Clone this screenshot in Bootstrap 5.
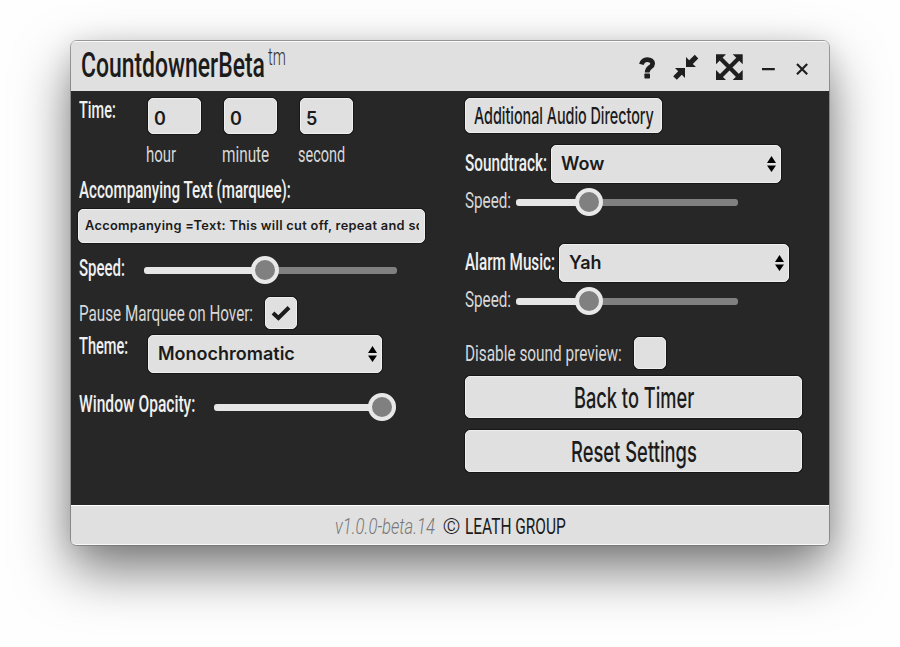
<!DOCTYPE html>
<html lang="en">
<head>
<meta charset="utf-8">
<meta name="viewport" content="width=device-width, initial-scale=1">
<title>CountdownerBeta</title>
<link rel="stylesheet" href="https://cdn.jsdelivr.net/npm/bootstrap@5.3.0/dist/css/bootstrap.min.css">
<style>
  :root { --ink: #272727; --paper: #e0e0e0; --mid: #808080; }
  body { background: #fefefe; padding: 41px 71px; height: 647px; overflow: hidden; font-family: Roboto, "Liberation Sans", sans-serif; }
  .app-window { width: 758px; height: 504px; border-radius: 6px; background: var(--ink);
    box-shadow: 0 0 0 1px rgba(110,110,110,.65), 0 25px 54px rgba(0,0,0,.52), 0 2px 26px rgba(0,0,0,.1); }
  .title-bar { height: 50px; background: var(--paper); color: #1f1f1f; border-radius: 5px 5px 0 0; border-top: 1px solid #fafafa; padding: 0 20px 0 10px; }
  .status-bar { height: 40px; background: var(--paper); border-radius: 0 0 5px 5px; border-top: 1px solid #fff; border-bottom: 1px solid #f8f8f8; padding-top: 8px; }
  .panel { height: 414px; padding: 6px 8px 0; }
  .col-l { width: 386px; }
  .col-r { width: 337px; }

  /* condensed display lettering: the text is squeezed to its data-w width */
  .fit { display: inline-block; flex: none; height: 24px; line-height: 26px; font-size: 23.5px; font-weight: 500; white-space: nowrap; color: #f0f0f0; text-align: left; }
  .fit > span { display: inline-block; transform-origin: 0 50%; }
  .fit.up { line-height: 23px; }
  .fit.thin { font-weight: 400; color: #d8d8d8; font-size: 22.5px; line-height: 24px; }
  .fit.thin.up { line-height: 22px; }
  .fit.dark { color: #1b1b1b; }
  .fit.brand { font-size: 35px; height: 48px; line-height: 48px; }
  .fit.tm { font-size: 23px; margin: 4px 0 0 3px; color: #333; font-weight: 300; }
  .fit.action { font-size: 29px; height: 40px; line-height: 42px; }
  .fit.light { font-weight: 300; }
  .fit.ver { color: #777; font-style: italic; font-weight: 300; }

  .tile { background: var(--paper); color: #1b1b1b; border: 1px solid #efefef; border-radius: 5px; box-shadow: 0 0 0 1px #171717; font-family: Inter, sans-serif; font-weight: 600; font-size: 18px; line-height: 1; flex: none; }
  .clock { width: 228px; margin: 1px 0 0 32px; }
  .num { width: 53px; height: 36px; padding: 6px 0 0 5px; }
  .num-cell { width: 76px; }
  .num-cell .fit { margin: 8px 0 0 -2px; }
  .marquee-field { width: 347px; height: 34px; padding: 0 5px 0 6px; font-size: 12.8px; letter-spacing: .3px; margin-left: -1px; }
  .marquee-field > div { line-height: 32px; }
  .pick { height: 38px; padding: 0 4px 0 9px; }
  .box { width: 32px; height: 32px; }
  .box-pause { margin-left: 12px; }
  .box-preview { margin-left: 12px; }
  .theme-pick { width: 234px; margin-left: 20px; }
  .audio-pick { width: 230px; margin: -1px 0 0 4px; }
  .dir { width: 197px; height: 35px; margin-top: 1px; padding-top: 4px; }
  .wide { width: 337px; height: 42px; margin-bottom: 12px; }

  .slide { -webkit-appearance: none; appearance: none; height: 28px; background: none; display: block; flex: none; margin: 0; }
  .slide::-webkit-slider-runnable-track { height: 7px; border-radius: 3px; background: linear-gradient(90deg, #e6e6e6 var(--at), var(--mid) var(--at)); }
  .slide::-webkit-slider-thumb { -webkit-appearance: none; width: 28px; height: 28px; margin-top: -10.5px; border-radius: 50%; background: var(--mid); border: 4px solid #e8e8e8; }
  .s-marquee { width: 253px; margin: -1px 0 0 19px; --at: 121px; }
  .s-opacity { width: 182px; margin-left: 19px; --at: 168px; }
  .s-audio { width: 222px; margin: -1px 0 0 5px; --at: 73px; }

  .r-time { height: 80px; } .r-cap { height: 32px; } .r-text { height: 48px; } .r-speed { height: 40px; }
  .r-pause { height: 38px; } .r-theme { height: 58px; }
  .r-dir { height: 48px; } .r-sel { height: 43px; } .r-aspeed { height: 56px; } .r-aspeed-last { height: 49px; } .r-prev { height: 39px; }
</style>
</head>
<body>
<main class="app-window d-flex flex-column">
  <header class="title-bar d-flex justify-content-between">
    <div class="d-flex">
      <span class="fit brand dark" data-w="184"><span>CountdownerBeta</span></span>
      <span class="fit thin tm" data-w="18"><span>tm</span></span>
    </div>
    <svg width="172" height="30" viewBox="637 50 172 30" class="mt-2" aria-label="Window controls" fill="#1f1f1f">
      <path d="M641.4 64.4C642.4 60.9 644.6 59.6 647.2 59.6C650.6 59.6 652.6 61.3 652.6 63.7C652.6 67.4 647.2 67.2 647.2 72.4" fill="none" stroke="#1f1f1f" stroke-width="4.8"/>
      <rect x="644.4" y="73.4" width="5.6" height="5.2" rx=".8"/>
      <path d="M686 57V67H696L692.8 63.9L698.3 58.4L694.8 54.8L689.2 60.3ZM685 68H675L678.2 71.2L673.2 76.2L676.8 79.8L681.8 74.8L685 78Z"/>
      <path d="M721 59L738 76M738 59L721 76" stroke="#1f1f1f" stroke-width="4.2"/>
      <path d="M716 54.3H726L716 64.3ZM742.7 54.3V64.3L732.7 54.3ZM716 80V70L726 80ZM742.7 80H732.7L742.7 70Z"/>
      <path d="M762 69.2H774.8M797 63.9L807.2 74.2M807.2 63.9L797 74.2" fill="none" stroke="#1f1f1f" stroke-width="2.2"/>
    </svg>
  </header>

  <section class="panel d-flex">
    <div class="col-l">
      <div class="r-time d-flex align-items-start">
        <span class="fit" data-w="37"><span>Time:</span></span>
        <div class="d-flex clock">
          <div class="num-cell"><div class="tile num d-flex align-items-center">0</div><span class="fit thin" data-w="30"><span>hour</span></span></div>
          <div class="num-cell"><div class="tile num d-flex align-items-center">0</div><span class="fit thin" data-w="47"><span>minute</span></span></div>
          <div class="num-cell"><div class="tile num d-flex align-items-center">5</div><span class="fit thin" data-w="47"><span>second</span></span></div>
        </div>
      </div>
      <div class="r-cap"><span class="fit" data-w="212"><span>Accompanying Text (marquee):</span></span></div>
      <div class="r-text"><div class="tile marquee-field"><div class="overflow-hidden text-nowrap">Accompanying =Text: This will cut off, repeat and sc</div></div></div>
      <div class="r-speed d-flex align-items-start">
        <span class="fit up" data-w="46"><span>Speed:</span></span>
        <input type="range" class="slide s-marquee" min="0" max="225" value="107" aria-label="Marquee speed">
      </div>
      <div class="r-pause d-flex align-items-start">
        <span class="fit thin mt-1" data-w="174"><span>Pause Marquee on Hover:</span></span>
        <div class="tile box box-pause d-flex align-items-center justify-content-center">
          <svg width="20" height="16" viewBox="0 0 20 16"><path d="M2 8L7.4 13L18 2.5" fill="none" stroke="#1b1b1b" stroke-width="4"/></svg>
        </div>
      </div>
      <div class="r-theme d-flex align-items-start">
        <span class="fit up" data-w="49"><span>Theme:</span></span>
        <div class="tile pick theme-pick d-flex align-items-center justify-content-between">Monochromatic
          <svg width="9" height="16" viewBox="0 0 9 16"><path d="M0 7L4.5 0L9 7ZM0 9.5H9L4.5 16Z"/></svg></div>
      </div>
      <div class="d-flex align-items-start">
        <span class="fit up" data-w="116"><span>Window Opacity:</span></span>
        <input type="range" class="slide s-opacity" min="0" max="100" value="100" aria-label="Window opacity">
      </div>
    </div>

    <div class="col-r">
      <div class="r-dir"><div class="tile dir d-flex justify-content-center"><span class="fit dark" data-w="180"><span>Additional Audio Directory</span></span></div></div>
      <div class="r-sel d-flex align-items-start">
        <span class="fit mt-1" data-w="82"><span>Soundtrack:</span></span>
        <div class="tile pick audio-pick d-flex align-items-center justify-content-between">Wow
          <svg width="9" height="16" viewBox="0 0 9 16"><path d="M0 7L4.5 0L9 7ZM0 9.5H9L4.5 16Z"/></svg></div>
      </div>
      <div class="r-aspeed d-flex align-items-start">
        <span class="fit thin up" data-w="46"><span>Speed:</span></span>
        <input type="range" class="slide s-audio" min="0" max="194" value="59" aria-label="Soundtrack speed">
      </div>
      <div class="r-sel d-flex align-items-start">
        <span class="fit mt-1" data-w="90"><span>Alarm Music:</span></span>
        <div class="tile pick audio-pick d-flex align-items-center justify-content-between">Yah
          <svg width="9" height="16" viewBox="0 0 9 16"><path d="M0 7L4.5 0L9 7ZM0 9.5H9L4.5 16Z"/></svg></div>
      </div>
      <div class="r-aspeed-last d-flex align-items-start">
        <span class="fit thin up" data-w="46"><span>Speed:</span></span>
        <input type="range" class="slide s-audio" min="0" max="194" value="59" aria-label="Alarm speed">
      </div>
      <div class="r-prev d-flex align-items-start">
        <span class="fit thin mt-1" data-w="157"><span>Disable sound preview:</span></span>
        <div class="tile box box-preview"></div>
      </div>
      <div class="tile wide d-flex justify-content-center"><span class="fit action dark" data-w="120"><span>Back to Timer</span></span></div>
      <div class="tile wide d-flex justify-content-center"><span class="fit action dark" data-w="126"><span>Reset Settings</span></span></div>
    </div>
  </section>

  <footer class="status-bar d-flex justify-content-center">
    <span class="fit thin ver" data-w="100"><span>v1.0.0-beta.14</span></span>
    <span class="fit thin dark light ms-2" data-w="18"><span>©</span></span>
    <span class="fit thin dark ms-1" data-w="101"><span>LEATH GROUP</span></span>
  </footer>
</main>
<script src="https://cdn.jsdelivr.net/npm/bootstrap@5.3.0/dist/js/bootstrap.bundle.min.js"></script>
<script>
  // squeeze every condensed label to its set width
  document.querySelectorAll('.fit').forEach(function (el) {
    var inner = el.firstElementChild, w = +el.dataset.w;
    inner.style.transform = 'scaleX(' + w / inner.offsetWidth + ')';
    el.style.width = w + 'px';
  });
</script>
</body>
</html>
